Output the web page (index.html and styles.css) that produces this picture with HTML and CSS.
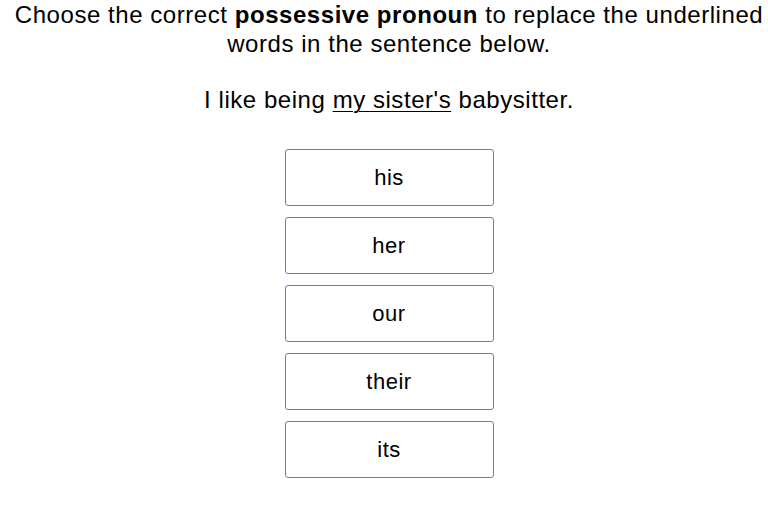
FILE: index.html
```html
<!DOCTYPE html>
<html>
<head>
<meta charset="utf-8">
<link rel="stylesheet" href="styles.css">
</head>
<body>
<div class="page">
  <p class="prompt">Choose the correct <b>possessive pronoun</b> to replace the underlined<br>words in the sentence below.</p>
  <p class="sentence">I like being <u>my sister's</u> babysitter.</p>
  <div class="choices">
    <div class="choice">his</div>
    <div class="choice">her</div>
    <div class="choice">our</div>
    <div class="choice">their</div>
    <div class="choice">its</div>
  </div>
</div>
</body>
</html>
```
FILE: styles.css
```css
html, body {
  margin: 0;
  padding: 0;
  background: #fff;
}
body {
  font-family: "Liberation Sans", Arial, sans-serif;
  color: #000;
}
.page {
  box-sizing: border-box;
  width: 768px;
  padding-left: 10px;
  display: flex;
  flex-direction: column;
  align-items: center;
}
.prompt {
  margin: 0;
  font-size: 24px;
  line-height: 29px;
  letter-spacing: 0.55px;
  text-align: center;
  white-space: nowrap;
}
.sentence {
  margin: 27px 0 0;
  font-size: 24px;
  line-height: 29px;
  letter-spacing: 0.55px;
  text-align: center;
}
.sentence u {
  text-underline-offset: 3px;
  text-decoration-thickness: 1px;
}
.choices {
  margin-top: 35px;
  display: flex;
  flex-direction: column;
  gap: 11px;
}
.choice {
  box-sizing: border-box;
  width: 209px;
  height: 57px;
  border: 1px solid #5288bd;
  border-radius: 3px;
  display: flex;
  align-items: center;
  justify-content: center;
  font-size: 22px;
  letter-spacing: 0.5px;
}
```
